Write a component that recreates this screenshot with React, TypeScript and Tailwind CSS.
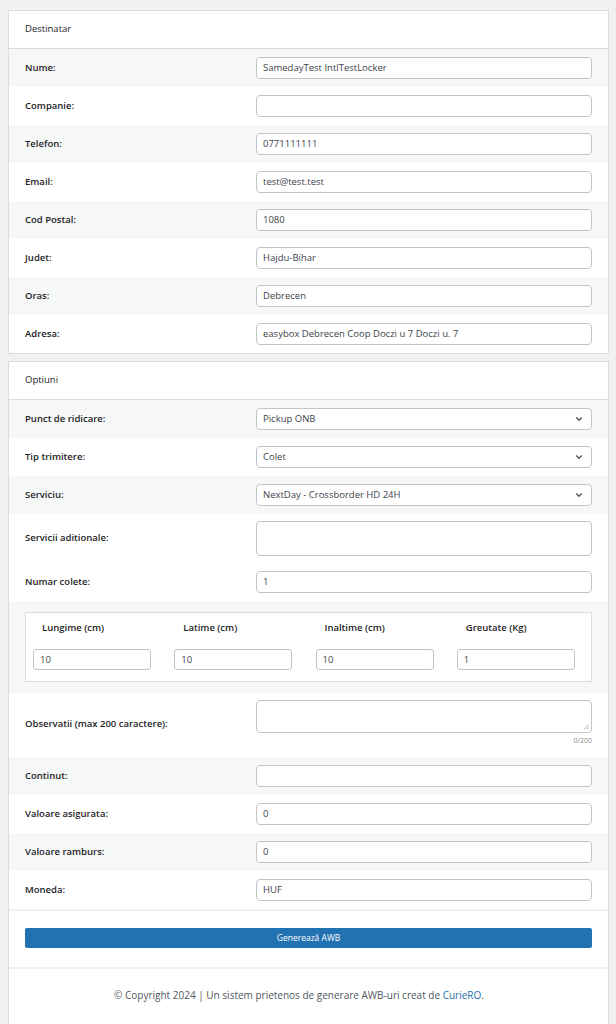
const font = { fontFamily: '"Open Sans", "Noto Sans", sans-serif' };

type Field = { label: string; value?: string; kind?: 'input' | 'select' | 'area'; gray?: boolean };

const Chevron = () => (
  <svg width="8" height="6" viewBox="0 0 8 6" className="absolute right-[8px] top-1/2 -translate-y-1/2">
    <path d="M1.2 1.5 L4 4.3 L6.8 1.5" fill="none" stroke="#50575e" strokeWidth="1.3" />
  </svg>
);

const Row = ({ label, value = '', kind = 'input', gray }: Field) => {
  const area = kind === 'area';
  return (
    <div
      className={`flex items-center px-4 ${area ? 'h-[49px]' : 'h-[38px]'} ${gray ? 'bg-[#f6f7f7]' : 'bg-white'}`}
    >
      <div className="w-[231px] shrink-0 text-[9.5px] font-semibold text-[#1d2327]">{label}</div>
      <div
        className={`relative flex-1 flex items-center rounded-[4px] border border-[#c3c4c7] bg-white px-[6px] text-[9.5px] text-[#3c434a] ${area ? 'h-[35px]' : 'h-[22px]'}`}
      >
        {value}
        {kind === 'select' && <Chevron />}
      </div>
    </div>
  );
};

const Header = ({ title }: { title: string }) => (
  <div className="flex h-[38px] items-center border-b border-[#dcdcde] px-4 text-[9.5px] text-[#1d2327]">{title}</div>
);

export default function App() {
  const dest: Field[] = [
    { label: 'Nume:', value: 'SamedayTest IntlTestLocker', gray: true },
    { label: 'Companie:' },
    { label: 'Telefon:', value: '0771111111', gray: true },
    { label: 'Email:', value: 'test@test.test' },
    { label: 'Cod Postal:', value: '1080', gray: true },
    { label: 'Judet:', value: 'Hajdu-Bihar' },
    { label: 'Oras:', value: 'Debrecen', gray: true },
    { label: 'Adresa:', value: 'easybox Debrecen Coop Doczi u 7 Doczi u. 7' },
  ];
  const dims = [
    ['Lungime (cm)', '10'],
    ['Latime (cm)', '10'],
    ['Inaltime (cm)', '10'],
    ['Greutate (Kg)', '1'],
  ];

  return (
    <div className="min-h-screen bg-[#f0f0f1] pl-[8px] pr-[7px] pt-[10px]" style={font}>
      {/* Destinatar */}
      <div className="border border-[#dcdcde] bg-white">
        <Header title="Destinatar" />
        {dest.map((f) => (
          <Row key={f.label} {...f} />
        ))}
      </div>

      {/* Optiuni */}
      <div className="mt-[7px] border border-[#dcdcde] bg-white">
        <Header title="Optiuni" />
        <Row label="Punct de ridicare:" value="Pickup ONB" kind="select" gray />
        <Row label="Tip trimitere:" value="Colet" kind="select" />
        <Row label="Serviciu:" value="NextDay - Crossborder HD 24H" kind="select" gray />
        <Row label="Servicii aditionale:" kind="area" />
        <Row label="Numar colete:" value="1" />

        {/* dimensiuni */}
        <div className="bg-[#f6f7f7] px-4 py-[11px]">
          <div className="grid h-[70px] grid-cols-4 border border-[#dcdcde] bg-white">
            {dims.map(([l, v]) => (
              <div key={l} className="flex flex-col">
                <div className="pl-[16px] pt-[8px] text-[9.5px] font-semibold text-[#1d2327]">{l}</div>
                <div className="ml-[7px] mt-[14px] flex h-[21px] w-[118px] items-center rounded-[3px] border border-[#c3c4c7] px-[6px] text-[9.5px] text-[#3c434a]">
                  {v}
                </div>
              </div>
            ))}
          </div>
        </div>

        {/* observatii */}
        <div className="flex h-[64px] px-4 bg-white">
          <div className="flex w-[231px] shrink-0 items-center pb-[2px] text-[9.5px] font-semibold text-[#1d2327]">
            Observatii (max 200 caractere):
          </div>
          <div className="flex flex-1 flex-col pt-[7px]">
            <div className="relative h-[33px] rounded-[4px] border border-[#c3c4c7]">
              <svg width="6" height="6" viewBox="0 0 6 6" className="absolute bottom-[2px] right-[2px]">
                <path d="M1 5.5 L5.5 1 M3.5 5.5 L5.5 3.5" stroke="#8c8f94" strokeWidth="0.8" />
              </svg>
            </div>
            <div className="mt-[3px] text-right text-[7px] text-[#8c8f94]">0/200</div>
          </div>
        </div>

        <Row label="Continut:" gray />
        <Row label="Valoare asigurata:" value="0" />
        <Row label="Valoare ramburs:" value="0" gray />
        <Row label="Moneda:" value="HUF" />

        <div className="border-t-2 border-[#f0f0f1] px-4 pb-[19px] pt-[17px]">
          <button className="flex h-[20px] w-full items-center justify-center rounded-[2px] bg-[#2271b1] text-[8.5px] text-white">
            Generează AWB
          </button>
        </div>

        <div className="flex h-[60px] items-start justify-center border-t-2 border-[#f0f0f1] pr-[19px] pt-[19px] text-[10px] text-[#50575e]">
          <span>
            © Copyright 2024 | Un sistem prietenos de generare AWB-uri creat de{' '}
            <span className="text-[#2271b1]">CurieRO</span>.
          </span>
        </div>
      </div>
    </div>
  );
}
